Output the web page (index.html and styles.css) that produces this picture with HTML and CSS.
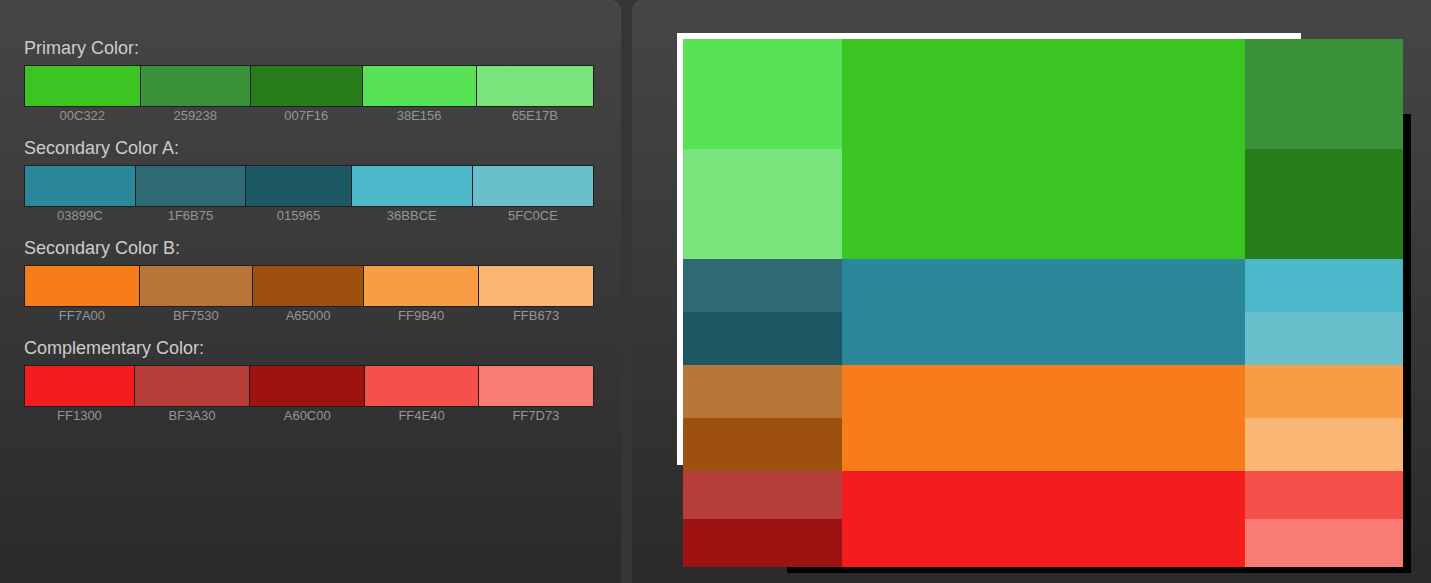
FILE: index.html
```html
<!DOCTYPE html>
<html lang="en">
<head>
    <meta charset="UTF-8">
    <title>Color Scheme</title>
    <link rel="stylesheet" href="styles.css">
</head>
<body>
    <div class="workspace">
        <div class="panel palette-panel">
            <div class="palette">
                <h3 class="palette-title">Primary Color:</h3>
                <table class="swatches">
                    <tr class="swatch-row">
                        <td class="c-00c322"></td>
                        <td class="c-259238"></td>
                        <td class="c-007f16"></td>
                        <td class="c-38e156"></td>
                        <td class="c-65e17b"></td>
                    </tr>
                    <tr class="code-row">
                        <td>00C322</td>
                        <td>259238</td>
                        <td>007F16</td>
                        <td>38E156</td>
                        <td>65E17B</td>
                    </tr>
                </table>
            </div>

            <div class="palette">
                <h3 class="palette-title">Secondary Color A:</h3>
                <table class="swatches">
                    <tr class="swatch-row">
                        <td class="c-03899c"></td>
                        <td class="c-1f6b75"></td>
                        <td class="c-015965"></td>
                        <td class="c-36bbce"></td>
                        <td class="c-5fc0ce"></td>
                    </tr>
                    <tr class="code-row">
                        <td>03899C</td>
                        <td>1F6B75</td>
                        <td>015965</td>
                        <td>36BBCE</td>
                        <td>5FC0CE</td>
                    </tr>
                </table>
            </div>

            <div class="palette">
                <h3 class="palette-title">Secondary Color B:</h3>
                <table class="swatches">
                    <tr class="swatch-row">
                        <td class="c-ff7a00"></td>
                        <td class="c-bf7530"></td>
                        <td class="c-a65000"></td>
                        <td class="c-ff9b40"></td>
                        <td class="c-ffb673"></td>
                    </tr>
                    <tr class="code-row">
                        <td>FF7A00</td>
                        <td>BF7530</td>
                        <td>A65000</td>
                        <td>FF9B40</td>
                        <td>FFB673</td>
                    </tr>
                </table>
            </div>

            <div class="palette">
                <h3 class="palette-title">Complementary Color:</h3>
                <table class="swatches">
                    <tr class="swatch-row">
                        <td class="c-ff1300"></td>
                        <td class="c-bf3a30"></td>
                        <td class="c-a60c00"></td>
                        <td class="c-ff4e40"></td>
                        <td class="c-ff7d73"></td>
                    </tr>
                    <tr class="code-row">
                        <td>FF1300</td>
                        <td>BF3A30</td>
                        <td>A60C00</td>
                        <td>FF4E40</td>
                        <td>FF7D73</td>
                    </tr>
                </table>
            </div>
        </div>

        <div class="panel preview-panel">
            <div class="preview">
                <div class="tile-group group-primary">
                    <div class="tile c-38e156"></div>
                    <div class="tile c-65e17b"></div>
                    <div class="tile tile-main c-00c322"></div>
                    <div class="tile c-259238"></div>
                    <div class="tile c-007f16"></div>
                </div>
                <div class="tile-group group-secondary">
                    <div class="tile c-1f6b75"></div>
                    <div class="tile c-015965"></div>
                    <div class="tile tile-main c-03899c"></div>
                    <div class="tile c-36bbce"></div>
                    <div class="tile c-5fc0ce"></div>
                </div>
                <div class="tile-group group-secondary">
                    <div class="tile c-bf7530"></div>
                    <div class="tile c-a65000"></div>
                    <div class="tile tile-main c-ff7a00"></div>
                    <div class="tile c-ff9b40"></div>
                    <div class="tile c-ffb673"></div>
                </div>
                <div class="tile-group group-complement">
                    <div class="tile c-bf3a30"></div>
                    <div class="tile c-a60c00"></div>
                    <div class="tile tile-main c-ff1300"></div>
                    <div class="tile c-ff4e40"></div>
                    <div class="tile c-ff7d73"></div>
                </div>
            </div>
        </div>
    </div>
</body>
</html>
```

FILE: styles.css
```css
* {
    margin: 0;
    padding: 0;
    box-sizing: border-box;
}

body {
    font-family: 'Liberation Sans', Arial, sans-serif;
    background: #363636;
    height: 100vh;
    overflow: hidden;
}

.workspace {
    display: flex;
    gap: 11px;
    height: 100vh;
}

.panel {
    height: 100%;
    background: linear-gradient(180deg, #464646 0%, #2a2a2a 100%);
}

.palette-panel {
    width: 621px;
    flex-shrink: 0;
    border-radius: 0 10px 0 0;
    padding: 38px 0 0 24px;
}

.preview-panel {
    flex: 1;
    border-radius: 10px 0 0 0;
    position: relative;
    z-index: 0;
}

/* Palettes */

.palette {
    margin-bottom: 14px;
}

.palette-title {
    font-size: 18px;
    font-weight: normal;
    line-height: 20px;
    color: #cdcdcd;
    margin-bottom: 7px;
}

.swatches {
    width: 570px;
    border-collapse: collapse;
}

.swatches td {
    padding: 0;
}

.swatch-row td {
    height: 41px;
    border: 1px solid #1f1f1f;
}

.code-row td {
    font-size: 13px;
    line-height: 16px;
    color: #959595;
    text-align: center;
    padding-top: 1px;
}

/* Preview */

.preview {
    position: relative;
    width: 720px;
    margin: 39px 0 0 51px;
}

.preview::before,
.preview::after {
    content: '';
    position: absolute;
    z-index: -1;
    width: 624px;
}

.preview::before {
    left: -6px;
    top: -6px;
    height: 432px;
    background: #fff;
}

.preview::after {
    left: 104px;
    top: 75px;
    height: 459px;
    background: #000;
}

.tile-group {
    display: grid;
    grid-template-columns: 159px 403px 158px;
    grid-template-rows: 1fr 1fr;
    grid-auto-flow: column;
    height: 106px;
}

.group-primary { height: 220px; }
.group-complement { height: 96px; }

.tile-main {
    grid-row: span 2;
}

/* Colours */

.c-00c322 { background: #3cc423; }
.c-259238 { background: #39923a; }
.c-007f16 { background: #267d19; }
.c-38e156 { background: #58e356; }
.c-65e17b { background: #78e47b; }

.c-03899c { background: #2b889b; }
.c-1f6b75 { background: #2f6a74; }
.c-015965 { background: #1d5865; }
.c-36bbce { background: #4cb8ca; }
.c-5fc0ce { background: #6abfcc; }

.c-ff7a00 { background: #f77c1a; }
.c-bf7530 { background: #b87538; }
.c-a65000 { background: #9e510e; }
.c-ff9b40 { background: #f89c46; }
.c-ffb673 { background: #fab675; }

.c-ff1300 { background: #f51c1d; }
.c-bf3a30 { background: #b73d38; }
.c-a60c00 { background: #9c1312; }
.c-ff4e40 { background: #f6504a; }
.c-ff7d73 { background: #f77c75; }
```
